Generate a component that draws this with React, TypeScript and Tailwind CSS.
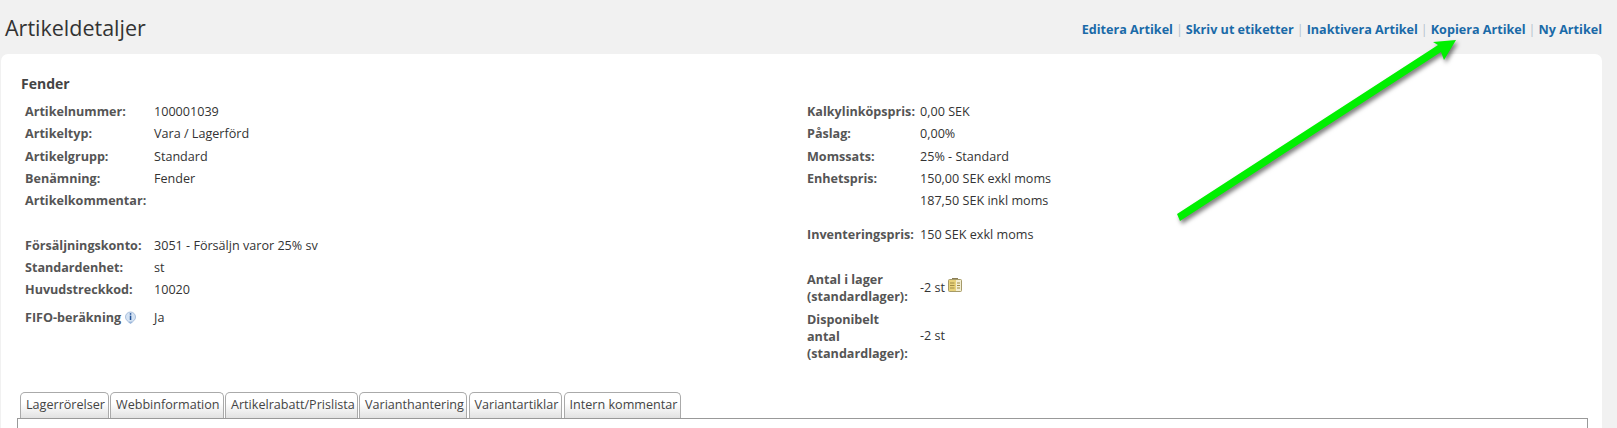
const font = { fontFamily: '"Open Sans", sans-serif' };

const leftTop = [
  ['Artikelnummer:', '100001039'],
  ['Artikeltyp:', 'Vara / Lagerförd'],
  ['Artikelgrupp:', 'Standard'],
  ['Benämning:', 'Fender'],
  ['Artikelkommentar:', ''],
];

const leftBottom = [
  ['Försäljningskonto:', '3051 - Försäljn varor 25% sv'],
  ['Standardenhet:', 'st'],
  ['Huvudstreckkod:', '10020'],
];

const rightTop = [
  ['Kalkylinköpspris:', '0,00 SEK'],
  ['Påslag:', '0,00%'],
  ['Momssats:', '25% - Standard'],
  ['Enhetspris:', '150,00 SEK exkl moms'],
  ['', '187,50 SEK inkl moms'],
];

const links = ['Editera Artikel', 'Skriv ut etiketter', 'Inaktivera Artikel', 'Kopiera Artikel', 'Ny Artikel'];
const tabs = [
  ['Lagerrörelser', 'w-[88.5px]'],
  ['Webbinformation', 'w-[113.5px]'],
  ['Artikelrabatt/Prislista', 'w-[132.5px]'],
  ['Varianthantering', 'w-[108px]'],
  ['Variantartiklar', 'w-[93.5px]'],
  ['Intern kommentar', 'w-[117px]'],
];

function Row({ label, value, labelWidth }: { label: string; value: string; labelWidth: string }) {
  return (
    <div className="flex h-[22.4px] items-center">
      <div className={`${labelWidth} shrink-0 font-bold text-[#555]`}>{label}</div>
      <div className="whitespace-nowrap text-[#333]">{value}</div>
    </div>
  );
}

function InfoIcon() {
  return (
    <svg width="13" height="13" viewBox="0 0 13 13" className="ml-[3px] -translate-y-[1px]">
      <circle cx="6.5" cy="6" r="5" fill="#d5e3f3" stroke="#a9c0de" />
      <path d="M4 11h5L6.5 13z" fill="#9db8dc" />
      <rect x="5.8" y="2.2" width="1.5" height="1.5" fill="#1f4f96" />
      <rect x="5.8" y="4.6" width="1.5" height="4.4" fill="#1f4f96" />
    </svg>
  );
}

function BookIcon() {
  return (
    <svg width="14" height="14" viewBox="0 0 14 14" className="ml-[3px] -translate-y-[3px]">
      <rect x="4" y="0" width="6" height="2" fill="#8a7d55" />
      <rect x="0.5" y="1.5" width="13" height="12" rx="1" fill="#e8d27a" stroke="#a59a6a" />
      <rect x="8" y="2" width="5" height="11" fill="#f3eed2" />
      <path d="M2 5h4.5M2 7.5h4.5M2 10h4.5M9 5h3M9 7.5h3M9 10h3" stroke="#a08c45" strokeWidth="1" />
    </svg>
  );
}

export default function App() {
  return (
    <div className="relative h-[428px] w-full overflow-hidden bg-[#f1f1f1] text-[12.6px]" style={font}>
      <header className="flex h-[54px] items-start justify-between pl-[5px] pr-[15px]">
        <h1 className="mt-[13px] text-[21.5px] leading-[30px] text-[#333]">Artikeldetaljer</h1>
        <nav className="mt-[21px] flex items-center font-bold leading-[18px] text-[#1a6aa8]">
          {links.map((link, i) => (
            <span key={link} className="flex items-center">
              {i > 0 && <span className="mx-[3px] font-normal text-[#b4c2cc]">|</span>}
              <a href="#">{link}</a>
            </span>
          ))}
        </nav>
      </header>

      <main className="ml-[1px] h-[374px] w-[1601px] rounded-t-[7px] bg-white pl-[20px] pt-[20px]">
        <h2 className="text-[14px] font-bold leading-[20px] text-[#444]">Fender</h2>

        <div className="mt-[7px] flex pl-[4px]">
          <section className="w-[782px]">
            {leftTop.map(([label, value]) => (
              <Row key={label} label={label} value={value} labelWidth="w-[129px]" />
            ))}
            <div className="mt-[22px]">
              {leftBottom.map(([label, value]) => (
                <Row key={label} label={label} value={value} labelWidth="w-[129px]" />
              ))}
            </div>
            <div className="mt-[5px] flex h-[22.4px] items-center">
              <div className="flex w-[129px] shrink-0 items-center font-bold text-[#555]">
                FIFO-beräkning
                <InfoIcon />
              </div>
              <div className="text-[#333]">Ja</div>
            </div>
          </section>

          <section>
            {rightTop.map(([label, value]) => (
              <Row key={value} label={label} value={value} labelWidth="w-[113px]" />
            ))}
            <div className="mt-[11px]">
              <Row label="Inventeringspris:" value="150 SEK exkl moms" labelWidth="w-[113px]" />
            </div>
            <div className="mt-[25px] flex items-center">
              <div className="w-[113px] shrink-0 font-bold leading-[17px] text-[#555]">
                Antal i lager
                <br />
                (standardlager):
              </div>
              <div className="flex items-center text-[#333]">
                -2 st
                <BookIcon />
              </div>
            </div>
            <div className="mt-[6px] flex items-center">
              <div className="w-[113px] shrink-0 font-bold leading-[17px] text-[#555]">
                Disponibelt
                <br />
                antal
                <br />
                (standardlager):
              </div>
              <div className="text-[#333]">-2 st</div>
            </div>
          </section>
        </div>
      </main>

      <div className="absolute left-[17px] top-[392px]">
        <div className="flex gap-[1.5px] pl-[3px]">
          {tabs.map(([tab, width]) => (
            <div
              key={tab}
              className={`${width} flex h-[26px] items-center whitespace-nowrap rounded-t-[5px] border border-b-0 border-[#aaa] bg-gradient-to-b from-white from-40% to-[#e2e2e2] pl-[5px] text-[#444]`}
            >
              {tab}
            </div>
          ))}
        </div>
        <div className="h-[12px] w-[1571px] border border-b-0 border-[#999] bg-white" />
      </div>

      {/* green annotation arrow */}
      <svg className="absolute left-0 top-0" width="1617" height="428" viewBox="0 0 1617 428">
        <g fill="#00f000" stroke="none" style={{ filter: 'drop-shadow(2px 3px 2px rgba(0,0,0,0.5))' }}>
          <path d="M1177 214 L1438 45 L1433 42 L1456 40 L1444 60 L1441 52 L1180 221 Z" />
        </g>
      </svg>
    </div>
  );
}
